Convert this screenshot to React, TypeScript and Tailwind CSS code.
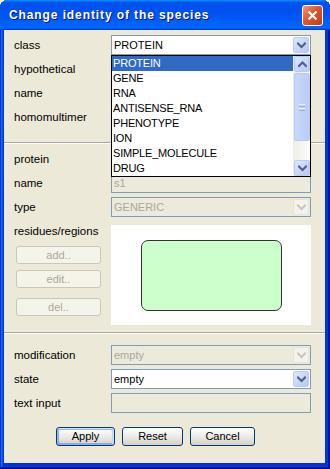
import React from "react";

function Chevron({ dir = "down", color = "#4D6185" }: { dir?: "down" | "up"; color?: string }) {
  const d = dir === "down" ? "M1 1.5 L4.5 5 L8 1.5" : "M1 5 L4.5 1.5 L8 5";
  return (
    <svg width="9" height="7" viewBox="0 0 9 7">
      <path d={d} stroke={color} strokeWidth="2" fill="none" strokeLinecap="square" />
    </svg>
  );
}

function DropBtn({ disabled }: { disabled?: boolean }) {
  return (
    <div
      className={
        disabled
          ? "m-[1px] w-[16px] flex items-center justify-center rounded-[2px] border border-[#E6E4D8] bg-[#F3F2EC]"
          : "m-[1px] w-[16px] flex items-center justify-center rounded-[2px] border border-[#B9CBF5] bg-gradient-to-br from-[#DDE7FD] to-[#B5C9F7]"
      }
    >
      <Chevron color={disabled ? "#C9C7BA" : "#4D6185"} />
    </div>
  );
}

function Combo({ value, disabled }: { value: string; disabled?: boolean }) {
  return (
    <div
      className={
        "flex h-[20px] w-[200px] border border-[#7F9DB9] " + (disabled ? "bg-[#EBEADB]" : "bg-white")
      }
    >
      <div
        className={
          "flex-1 flex items-center pl-[2px] text-[11px] " + (disabled ? "text-[#ACA899]" : "text-black")
        }
      >
        {value}
      </div>
      <DropBtn disabled={disabled} />
    </div>
  );
}

function TextField({ value }: { value?: string }) {
  return (
    <div className="flex h-[20px] w-[200px] items-center border border-[#7F9DB9] bg-[#EBEADB] pl-[2px] text-[11px] text-[#ACA899]">
      {value}
    </div>
  );
}

function Row({ label, children }: { label: string; children?: React.ReactNode }) {
  return (
    <div className="flex h-[20px] items-center">
      <div className="w-[97px] pt-[2px]">{label}</div>
      {children}
    </div>
  );
}

function Sep() {
  return <div className="h-[2px] border-t border-b border-t-[#ACA899] border-b-white" />;
}

function DisBtn({ label }: { label: string }) {
  return (
    <div className="flex h-[18px] w-[85px] items-center justify-center rounded-[3px] border border-[#C9C7BA] bg-[#F5F4EA] text-[11px] text-[#ACA899]">
      {label}
    </div>
  );
}

function Btn({ label, w, def }: { label: string; w: string; def?: boolean }) {
  return (
    <div
      className={
        "flex h-[19px] items-center justify-center rounded-[3px] border border-[#003C74] bg-gradient-to-b from-white via-[#ECEBE6] to-[#D6D0C5] text-[11px] text-black " +
        w +
        (def
          ? " shadow-[inset_-1px_1px_#CEE7FF,inset_1px_2px_#98B8EA,inset_-2px_2px_#BCD4F6,inset_1px_-1px_#89ADE4,inset_2px_-2px_#89ADE4]"
          : "")
      }
    >
      {label}
    </div>
  );
}

const ITEMS = ["PROTEIN", "GENE", "RNA", "ANTISENSE_RNA", "PHENOTYPE", "ION", "SIMPLE_MOLECULE", "DRUG"];

function ScrollBtn({ dir }: { dir: "up" | "down" }) {
  return (
    <div className="flex h-[16px] w-[16px] items-center justify-center rounded-[2px] border border-[#B9CBF5] bg-gradient-to-br from-[#DDE7FD] to-[#B5C9F7]">
      <Chevron dir={dir} />
    </div>
  );
}

function DropList() {
  return (
    <div className="absolute left-[107px] top-[25px] flex h-[122px] w-[200px] border border-black bg-white">
      <div className="flex flex-1 flex-col">
        {ITEMS.map((it, i) => (
          <div
            key={it}
            className={
              "flex h-[15px] items-center pl-[1px] text-[11px] tracking-[-0.2px] " +
              (i === 0 ? "bg-[#316AC5] text-white" : "text-black")
            }
          >
            {it}
          </div>
        ))}
      </div>
      <div className="flex w-[17px] flex-col items-end bg-gradient-to-r from-[#EEEDE5] to-[#FCFCFA]">
        <ScrollBtn dir="up" />
        <div className="mt-[1px] flex h-[68px] w-[16px] flex-col items-center justify-center gap-[1px] rounded-[2px] border border-[#B9CBF5] bg-gradient-to-r from-[#C9D8FC] to-[#BACDF8]">
          <div className="h-[1px] w-[6px] bg-[#EEF4FE]" />
          <div className="h-[1px] w-[6px] bg-[#8CB0F8]" />
          <div className="h-[1px] w-[6px] bg-[#EEF4FE]" />
          <div className="h-[1px] w-[6px] bg-[#8CB0F8]" />
        </div>
        <div className="flex-1" />
        <ScrollBtn dir="down" />
      </div>
    </div>
  );
}

export default function App() {
  return (
    <div className="h-[469px] w-[330px] bg-white font-['Liberation_Sans',Arial,sans-serif]">
      <div className="flex h-full flex-col rounded-t-[8px] bg-[#0831D9] shadow-[inset_-1px_-1px_#00138C,inset_1px_1px_#0831D9,inset_-2px_-2px_#001EA0,inset_2px_2px_#166AEE,inset_-3px_-3px_#003BDA,inset_3px_3px_#0855DD]">
        {/* title bar */}
        <div className="flex h-[30px] items-center justify-between rounded-t-[8px] bg-[linear-gradient(180deg,#0997FF,#0053EE_8%,#0050EE_40%,#0066FF_88%,#0066FF_93%,#005BFF_95%,#003DD7_96%,#003DD7)] pl-[9px] pr-[7px]">
          <div className="text-[12px] font-bold tracking-[0.9px] text-white [text-shadow:1px_1px_0_#0F1089]">
            Change identity of the species
          </div>
          <div className="flex h-[21px] w-[21px] items-center justify-center rounded-[3px] border border-white bg-[linear-gradient(135deg,#F39878,#E0552B_45%,#C73A10)]">
            <svg width="11" height="11" viewBox="0 0 11 11">
              <path d="M1.5 1.5 L9.5 9.5 M9.5 1.5 L1.5 9.5" stroke="white" strokeWidth="2.2" />
            </svg>
          </div>
        </div>
        {/* body */}
        <div className="flex flex-1 pb-[6px] pl-[4px] pr-[5px]">
          <div className="relative flex flex-1 flex-col bg-[#ECE9D8] text-[11.5px] text-black">
            <div className="flex flex-col gap-[4px] pb-[15px] pl-[10px] pt-[5px]">
              <Row label="class">
                <Combo value="PROTEIN" />
              </Row>
              <Row label="hypothetical" />
              <Row label="name" />
              <Row label="homomultimer" />
            </div>
            <Sep />
            <div className="flex flex-col gap-[4px] pb-[7px] pl-[10px] pt-[5px]">
              <Row label="protein" />
              <Row label="name">
                <TextField value="s1" />
              </Row>
              <Row label="type">
                <Combo value="GENERIC" disabled />
              </Row>
              <div className="flex">
                <div className="flex w-[97px] flex-col">
                  <div className="flex h-[20px] items-center pt-[2px]">residues/regions</div>
                  <div className="ml-[2px] mt-[5px]">
                    <DisBtn label="add.." />
                  </div>
                  <div className="ml-[2px] mt-[6px]">
                    <DisBtn label="edit.." />
                  </div>
                  <div className="ml-[2px] mt-[10px]">
                    <DisBtn label="del.." />
                  </div>
                </div>
                <div className="mt-[4px] flex h-[100px] w-[200px] items-center justify-center bg-white">
                  <div className="h-[71px] w-[141px] rounded-[7px] border border-[#333333] bg-[#CCFFCC]" />
                </div>
              </div>
            </div>
            <Sep />
            <div className="flex flex-col gap-[4px] pl-[10px] pt-[11px]">
              <Row label="modification">
                <Combo value="empty" disabled />
              </Row>
              <Row label="state">
                <Combo value="empty" />
              </Row>
              <Row label="text input">
                <TextField />
              </Row>
            </div>
            <div className="mt-[14px] flex gap-[7px] pl-[52px]">
              <Btn label="Apply" w="w-[59px]" def />
              <Btn label="Reset" w="w-[61px]" />
              <Btn label="Cancel" w="w-[65px]" />
            </div>
            <DropList />
          </div>
        </div>
      </div>
    </div>
  );
}
